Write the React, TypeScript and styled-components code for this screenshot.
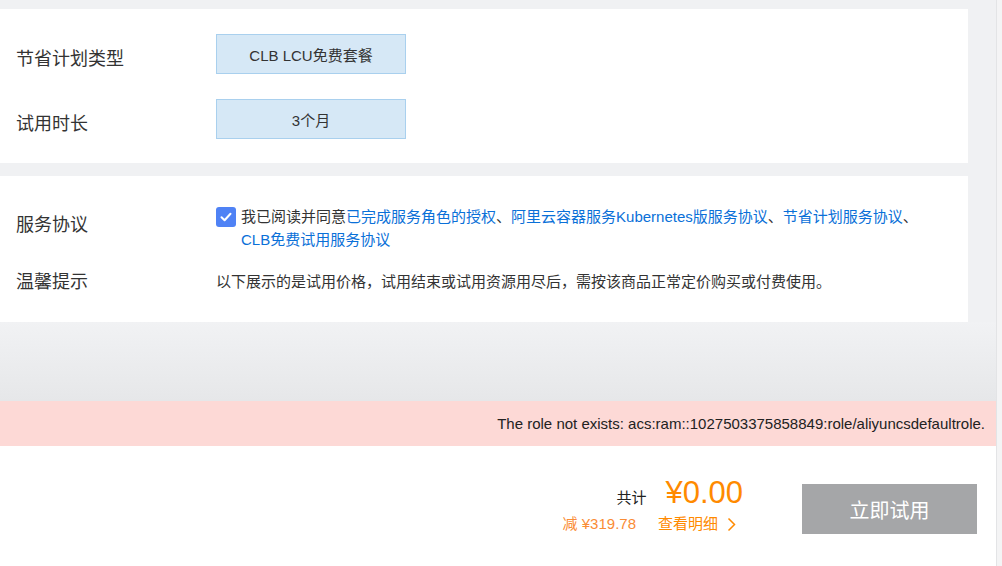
import * as React from 'react';
import styled, { createGlobalStyle } from 'styled-components';

const GlobalStyle = createGlobalStyle`
  html, body {
    margin: 0;
    padding: 0;
    background: #f0f1f3;
  }
  body {
    font-family: "Liberation Sans", "Noto Sans CJK SC", sans-serif;
    color: #333;
  }
`;

const Shell = styled.div`
  display: flex;
  width: 1002px;
  height: 566px;
  overflow: hidden;
`;

const Main = styled.div`
  flex: 1;
  display: flex;
  flex-direction: column;
`;

const Rail = styled.div`
  width: 5px;
  background: #f4f4f5;
  border-left: 1px solid #e3e4e6;
`;

const Card = styled.section<{ $top: number; $pad: string }>`
  width: 968px;
  box-sizing: border-box;
  margin-top: ${({ $top }) => $top}px;
  padding: ${({ $pad }) => $pad};
  background: #fff;
  display: flex;
  flex-direction: column;
`;

const Row = styled.div<{ $gap?: number }>`
  display: flex;
  align-items: flex-start;
  margin-top: ${({ $gap }) => $gap || 0}px;
`;

// label sits a few px below the top of its row without growing the row
const Label = styled.div<{ $offset: number; $lh: number }>`
  width: 200px;
  padding-left: 16px;
  padding-top: ${({ $offset }) => $offset}px;
  margin-bottom: -${({ $offset }) => $offset}px;
  font-size: 18px;
  line-height: ${({ $lh }) => $lh}px;
  color: #333;
  flex-shrink: 0;
`;

const Choice = styled.div`
  width: 190px;
  height: 40px;
  box-sizing: border-box;
  background: #d6e8f6;
  border: 1px solid #a9d0ee;
  display: flex;
  align-items: center;
  justify-content: center;
  font-size: 15px;
  color: #333;
`;

const Agree = styled.div`
  display: flex;
  align-items: flex-start;
  gap: 5px;
`;

const Check = styled.span`
  width: 20px;
  height: 20px;
  margin-top: 2px;
  border-radius: 3px;
  background: #4f82f5;
  display: flex;
  align-items: center;
  justify-content: center;
  flex-shrink: 0;
`;

const Body = styled.div<{ $max?: number }>`
  font-size: 15px;
  line-height: 23px;
  color: #333;
  max-width: ${({ $max }) => ($max ? `${$max}px` : 'none')};
`;

const Link = styled.a`
  color: #0a70d8;
  text-decoration: none;
`;

const Spacer = styled.div`
  flex: 1;
  background: linear-gradient(#f1f2f4, #e6e7e9);
`;

const ErrorBar = styled.div`
  height: 45px;
  background: #fdd9d6;
  display: flex;
  align-items: center;
  justify-content: flex-end;
  padding-right: 11px;
  font-size: 15px;
  color: #222;
`;

const Footer = styled.footer`
  height: 120px;
  background: #fff;
  display: flex;
  justify-content: flex-end;
  align-items: flex-start;
  padding: 27px 19px 0 0;
  box-sizing: border-box;
  gap: 59px;
`;

const Price = styled.div`
  display: flex;
  flex-direction: column;
  align-items: flex-end;
`;

const TotalLine = styled.div`
  display: flex;
  align-items: baseline;
  gap: 19px;
  font-size: 15px;
  color: #222;
`;

const Amount = styled.span`
  font-size: 31px;
  line-height: 40px;
  color: #ff8a00;
`;

const SubLine = styled.div`
  display: flex;
  align-items: center;
  gap: 22px;
  margin-right: 7px;
  font-size: 15px;
  line-height: 22px;
`;

const Saved = styled.span`
  color: #fa8c35;
`;

const Detail = styled.span`
  display: flex;
  align-items: center;
  gap: 9px;
  color: #ff8a00;
`;

const TryButton = styled.button`
  width: 175px;
  height: 50px;
  margin-top: 11px;
  border: 0;
  background: #a5a6a8;
  color: #fff;
  font-family: inherit;
  font-size: 20px;
  cursor: not-allowed;
`;

export default function App() {
  return (
    <Shell>
      <GlobalStyle />
      <Main>
        <Card $top={9} $pad="25px 0 24px">
          <Row>
            <Label $offset={5} $lh={40}>节省计划类型</Label>
            <Choice>CLB LCU免费套餐</Choice>
          </Row>
          <Row $gap={25}>
            <Label $offset={5} $lh={40}>试用时长</Label>
            <Choice>3个月</Choice>
          </Row>
        </Card>
        <Card $top={13} $pad="29px 0">
          <Row>
            <Label $offset={9} $lh={23}>服务协议</Label>
            <Agree>
              <Check>
                <svg width="12" height="10" viewBox="0 0 12 10">
                  <path d="M1.5 5.2 L4.6 8.2 L10.5 1.8" fill="none" stroke="#fff" strokeWidth="2" strokeLinecap="round" strokeLinejoin="round" />
                </svg>
              </Check>
              <Body $max={700}>
                我已阅读并同意<Link>已完成服务角色的授权</Link>、<Link>阿里云容器服务Kubernetes版服务协议</Link>、<Link>节省计划服务协议</Link>、<Link>CLB免费试用服务协议</Link>
              </Body>
            </Agree>
          </Row>
          <Row $gap={19}>
            <Label $offset={1} $lh={23}>温馨提示</Label>
            <Body>以下展示的是试用价格，试用结束或试用资源用尽后，需按该商品正常定价购买或付费使用。</Body>
          </Row>
        </Card>
        <Spacer />
        <ErrorBar>The role not exists: acs:ram::1027503375858849:role/aliyuncsdefaultrole.</ErrorBar>
        <Footer>
          <Price>
            <TotalLine>
              <span>共计</span>
              <Amount>¥0.00</Amount>
            </TotalLine>
            <SubLine>
              <Saved>减 ¥319.78</Saved>
              <Detail>
                查看明细
                <svg width="9" height="15" viewBox="0 0 9 15">
                  <path d="M1.5 1.5 L7.5 7.5 L1.5 13.5" fill="none" stroke="#ff8a00" strokeWidth="1.5" />
                </svg>
              </Detail>
            </SubLine>
          </Price>
          <TryButton>立即试用</TryButton>
        </Footer>
      </Main>
      <Rail />
    </Shell>
  );
}
